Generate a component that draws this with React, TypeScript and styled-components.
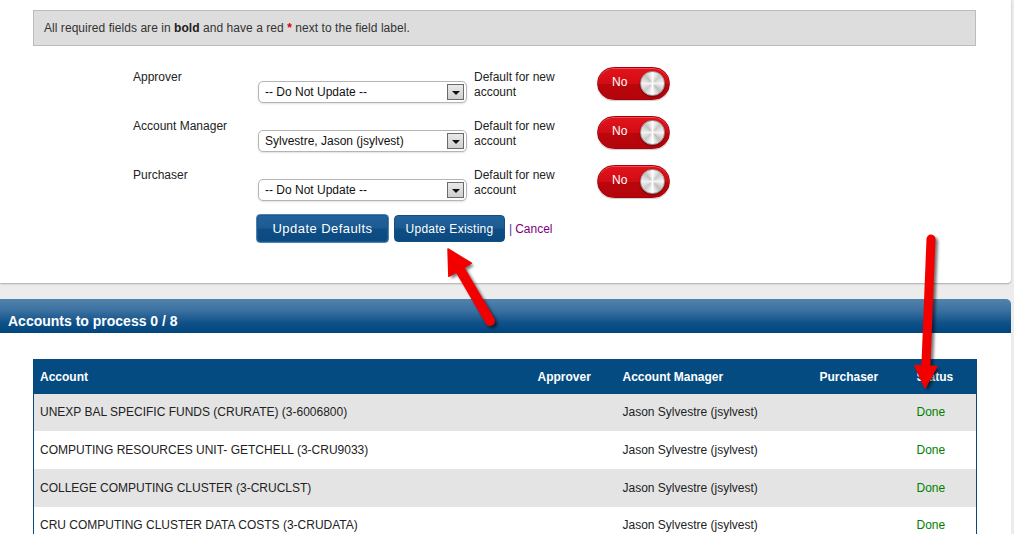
import React from "react";
import styled, { createGlobalStyle } from "styled-components";

const Global = createGlobalStyle`
  html, body { margin: 0; padding: 0; }
  body {
    background: #ececec;
    font-family: "Liberation Sans", Arial, sans-serif;
    font-size: 12px;
    color: #222;
    overflow: hidden;
  }
`;

const Page = styled.div`
  position: relative;
  width: 1011px;
  min-height: 534px;
`;

const TopPanel = styled.div`
  background: #fff;
  height: 283px;
  box-sizing: border-box;
  padding-top: 10px;
  border-bottom-right-radius: 4px;
  box-shadow: 0 1px 2px rgba(0, 0, 0, 0.28);
`;

const InfoBox = styled.div`
  margin: 0 35px 0 33px;
  height: 36px;
  box-sizing: border-box;
  background: #dddddd;
  border: 1px solid #bcbcbc;
  padding: 0 10px;
  display: flex;
  align-items: center;
  color: #333;
  letter-spacing: 0.05px;
  b { color: #222; }
`;

const Req = styled.span`
  color: #e00000;
  font-weight: bold;
`;

const Form = styled.div`
  margin-top: 21px;
  padding-left: 133px;
`;

const FieldGrid = styled.div`
  display: grid;
  grid-template-columns: 125px 216px 123px 73px;
  grid-auto-rows: 49px;
  align-items: start;
`;

const Label = styled.div`
  line-height: 15px;
  margin-top: 3px;
  color: #222;
`;

const SelectBox = styled.div`
  margin-top: 14px;
  width: 209px;
  height: 22px;
  box-sizing: border-box;
  border: 1px solid #b5b5b5;
  border-radius: 5px;
  background: #fff;
  box-shadow: 0 1px 2px rgba(0, 0, 0, 0.12);
  display: flex;
  align-items: center;
  justify-content: space-between;
  padding: 0 1px 0 6px;
  color: #111;
`;

const ArrowBox = styled.div`
  width: 17px;
  height: 16px;
  box-sizing: border-box;
  border: 1px solid #6a6a6a;
  background: linear-gradient(#e9e9e9, #cfcfcf);
  display: flex;
  align-items: center;
  justify-content: center;
  margin-right: 1px;
  &::after {
    content: "";
    border-left: 4px solid transparent;
    border-right: 4px solid transparent;
    border-top: 4px solid #111;
    margin-top: 1px;
  }
`;

const DefaultText = styled.div`
  line-height: 15px;
  margin-top: 3px;
  color: #222;
`;

const Toggle = styled.div`
  width: 73px;
  height: 33px;
  box-sizing: border-box;
  border-radius: 17px;
  border: 1px solid #a80008;
  background: linear-gradient(#e2141c 0%, #d20c14 50%, #bb060d 52%, #b3050b 100%);
  box-shadow: inset 0 1px 0 rgba(255, 255, 255, 0.25), 0 1px 1px rgba(0, 0, 0, 0.2);
  display: flex;
  align-items: center;
  justify-content: space-between;
  padding: 0 4px 0 14px;
  color: #fff;
  font-size: 12px;
  span { margin-bottom: 3px; }
`;

const Knob = styled.div`
  width: 25px;
  height: 25px;
  border-radius: 50%;
  box-sizing: border-box;
  border: 1px solid #9c9c9c;
  background:
    radial-gradient(circle at 50% 50%, rgba(255,255,255,0.5) 0 2px, transparent 3px),
    conic-gradient(#fdfdfd, #c9c9c9 12%, #f4f4f4 25%, #bdbdbd 38%, #ffffff 50%, #cacaca 63%, #f2f2f2 75%, #c2c2c2 88%, #fdfdfd);
  box-shadow: 0 1px 2px rgba(0, 0, 0, 0.35);
`;

const Actions = styled.div`
  display: flex;
  align-items: center;
  margin-left: 123px;
  gap: 5px;
`;

const Button = styled.button<{ $primary?: boolean }>`
  font-family: "Liberation Sans", Arial, sans-serif;
  font-size: ${(p) => (p.$primary ? "13px" : "12px")};
  letter-spacing: ${(p) => (p.$primary ? "0.45px" : "0.25px")};
  color: #fff;
  height: ${(p) => (p.$primary ? "29px" : "27px")};
  width: ${(p) => (p.$primary ? "133px" : "111px")};
  padding: 0;
  border-radius: 4px;
  border: 1px solid ${(p) => (p.$primary ? "#4f80ae" : "#174e80")};
  background: linear-gradient(#23629b 0%, #1c5a92 48%, #0f4d85 52%, #0b4a80 100%);
  box-shadow: ${(p) => (p.$primary ? "inset 0 0 0 1px #1a5990" : "none")};
  cursor: pointer;
`;

const CancelLink = styled.a`
  margin-left: -1px;
  color: #800080;
  text-decoration: none;
  font-size: 12px;
  span { color: #4a3a9a; margin-right: 3px; }
`;

const Section = styled.div`
  margin-top: 16px;
`;

const SectionHeader = styled.div`
  height: 34px;
  box-sizing: border-box;
  border-top-right-radius: 5px;
  background: linear-gradient(#5283ac 0%, #3a70a0 35%, #0f5189 70%, #02457d 100%);
  color: #fff;
  font-weight: bold;
  font-size: 14px;
  display: flex;
  align-items: flex-end;
  padding: 0 0 4px 8px;
`;

const SectionBody = styled.div`
  background: #fff;
  padding: 26px 35px 40px 33px;
  min-height: 200px;
`;

const Table = styled.table`
  width: 943px;
  border-collapse: collapse;
  table-layout: fixed;
  border: 1px solid #064a80;
`;

const Th = styled.th<{ $w: number }>`
  width: ${(p) => p.$w}px;
  height: 34px;
  background: #044b81;
  color: #fff;
  font-weight: bold;
  font-size: 12px;
  text-align: left;
  padding: 0 0 0 6px;
  box-sizing: border-box;
`;

const Tr = styled.tr<{ $alt: boolean }>`
  background: ${(p) => (p.$alt ? "#e4e4e4" : "#ffffff")};
`;

const Td = styled.td<{ $done?: boolean }>`
  height: 37.7px;
  padding: 0 0 0 6px;
  font-size: 12px;
  color: ${(p) => (p.$done ? "#008000" : "#222")};
  white-space: nowrap;
  overflow: hidden;
`;

const Overlay = styled.svg`
  position: absolute;
  left: 0;
  top: 0;
  pointer-events: none;
`;

type Pt = [number, number];

function arrowPath(tail: Pt, tip: Pt, headLen: number, halfW: number) {
  const dx = tip[0] - tail[0];
  const dy = tip[1] - tail[1];
  const len = Math.hypot(dx, dy);
  const ux = dx / len;
  const uy = dy / len;
  const nx = -uy;
  const ny = ux;
  const bx = tip[0] - ux * headLen;
  const by = tip[1] - uy * headLen;
  const head = `${tip[0]},${tip[1]} ${bx + nx * halfW},${by + ny * halfW} ${bx - nx * halfW},${by - ny * halfW}`;
  return { head, shaft: [tail[0], tail[1], bx + ux * 2, by + uy * 2] };
}

function Arrow({ tail, tip, headLen, halfW, width }: { tail: Pt; tip: Pt; headLen: number; halfW: number; width: number }) {
  const a = arrowPath(tail, tip, headLen, halfW);
  return (
    <g>
      <g transform="translate(2.5,2.5)" opacity="0.55" filter="url(#blur)">
        <line x1={a.shaft[0]} y1={a.shaft[1]} x2={a.shaft[2]} y2={a.shaft[3]} stroke="#000" strokeWidth={width} strokeLinecap="round" />
        <polygon points={a.head} fill="#000" />
      </g>
      <line x1={a.shaft[0]} y1={a.shaft[1]} x2={a.shaft[2]} y2={a.shaft[3]} stroke="#f20000" strokeWidth={width} strokeLinecap="round" />
      <polygon points={a.head} fill="#f20000" stroke="#f20000" strokeWidth="1.5" strokeLinejoin="round" />
    </g>
  );
}

const fields = [
  { label: "Approver", value: "-- Do Not Update --" },
  { label: "Account Manager", value: "Sylvestre, Jason (jsylvest)" },
  { label: "Purchaser", value: "-- Do Not Update --" },
];

const columns = [
  { name: "Account", w: 498 },
  { name: "Approver", w: 85 },
  { name: "Account Manager", w: 197 },
  { name: "Purchaser", w: 97 },
  { name: "Status", w: 66 },
];

const rows = [
  "UNEXP BAL SPECIFIC FUNDS (CRURATE) (3-6006800)",
  "COMPUTING RESOURCES UNIT- GETCHELL (3-CRU9033)",
  "COLLEGE COMPUTING CLUSTER (3-CRUCLST)",
  "CRU COMPUTING CLUSTER DATA COSTS (3-CRUDATA)",
];

export default function App() {
  return (
    <>
      <Global />
      <Page>
        <TopPanel>
          <InfoBox>
            <span>
              All required fields are in <b>bold</b> and have a red <Req>*</Req> next to the field label.
            </span>
          </InfoBox>
          <Form>
            <FieldGrid>
              {fields.map((f) => (
                <React.Fragment key={f.label}>
                  <Label>{f.label}</Label>
                  <SelectBox>
                    <span>{f.value}</span>
                    <ArrowBox />
                  </SelectBox>
                  <DefaultText>
                    Default for new
                    <br />
                    account
                  </DefaultText>
                  <Toggle>
                    <span>No</span>
                    <Knob />
                  </Toggle>
                </React.Fragment>
              ))}
            </FieldGrid>
            <Actions>
              <Button $primary>Update Defaults</Button>
              <Button>Update Existing</Button>
              <CancelLink href="#">
                <span>|</span>Cancel
              </CancelLink>
            </Actions>
          </Form>
        </TopPanel>
        <Section>
          <SectionHeader>Accounts to process 0 / 8</SectionHeader>
          <SectionBody>
            <Table>
              <thead>
                <tr>
                  {columns.map((c) => (
                    <Th key={c.name} $w={c.w}>
                      {c.name}
                    </Th>
                  ))}
                </tr>
              </thead>
              <tbody>
                {rows.map((r, i) => (
                  <Tr key={r} $alt={i % 2 === 0}>
                    <Td>{r}</Td>
                    <Td></Td>
                    <Td>Jason Sylvestre (jsylvest)</Td>
                    <Td></Td>
                    <Td $done>Done</Td>
                  </Tr>
                ))}
              </tbody>
            </Table>
          </SectionBody>
        </Section>
        <Overlay width="1014" height="534" viewBox="0 0 1014 534">
          <defs>
            <filter id="blur" x="-20%" y="-20%" width="140%" height="140%">
              <feGaussianBlur stdDeviation="1.5" />
            </filter>
          </defs>
          <Arrow tail={[490, 321]} tip={[448, 249]} headLen={24} halfW={13} width={10} />
          <Arrow tail={[931, 239]} tip={[925, 388]} headLen={22} halfW={11} width={9} />
        </Overlay>
      </Page>
    </>
  );
}
